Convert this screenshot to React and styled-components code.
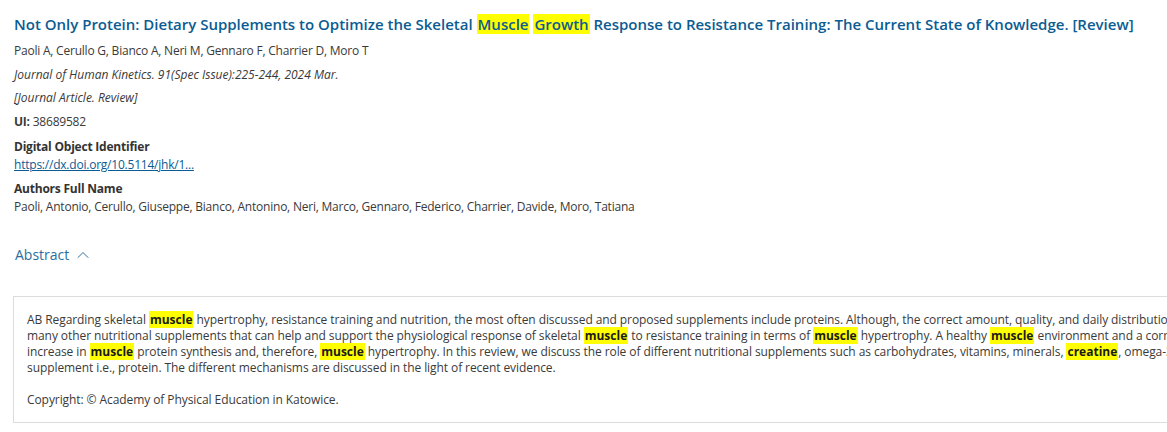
import React from 'react';
import styled, { createGlobalStyle } from 'styled-components';
import { ChevronUp } from 'lucide-react';

const GlobalStyle = createGlobalStyle`
  html, body {
    margin: 0;
    padding: 0;
    background: #ffffff;
    overflow: hidden;
  }
  body {
    font-family: "Open Sans", "Noto Sans", Arial, sans-serif;
    color: #333333;
  }
`;

const Page = styled.div`
  width: 1400px;
  padding: 13px 0 0 14px;
  box-sizing: border-box;
`;

const Title = styled.h1`
  margin: 0;
  font-size: 15px;
  font-weight: 600;
  line-height: 22px;
  color: #0b5c92;
`;

const Mark = styled.mark`
  background: #ffff00;
  color: ${p => (p.strong ? '#1a1a1a' : 'inherit')};
  font-weight: ${p => (p.strong ? 700 : 'inherit')};
  letter-spacing: 0;
  padding: 0 1px;
`;

const Meta = styled.div`
  display: flex;
  flex-direction: column;
  margin-top: 4px;
`;

const Line = styled.div`
  font-size: 12px;
  line-height: 23.7px;
  letter-spacing: ${p => (p.italic ? '0' : '-0.22px')};
  font-style: ${p => (p.italic ? 'italic' : 'normal')};
  color: #3a3a3a;
`;

const Label = styled.b`
  font-weight: 700;
`;

const Fields = styled.div`
  display: flex;
  flex-direction: column;
  gap: 6px;
  margin-top: 4px;
`;

const Field = styled.div`
  display: flex;
  flex-direction: column;
`;

const FieldLabel = styled.div`
  font-size: 12px;
  font-weight: 700;
  line-height: 18px;
  letter-spacing: -0.22px;
  color: #333333;
`;

const FieldValue = styled.div`
  font-size: 12px;
  line-height: 18px;
  letter-spacing: -0.22px;
  color: #3a3a3a;
`;

const DoiLink = styled.a`
  font-size: 12px;
  line-height: 18px;
  letter-spacing: -0.22px;
  color: #0b5c92;
  text-decoration: underline;
`;

const Toggle = styled.button`
  display: flex;
  align-items: center;
  gap: 4px;
  margin: 29px 0 0 1px;
  padding: 0;
  border: none;
  background: none;
  font-family: inherit;
  font-size: 14px;
  line-height: 20px;
  color: #2a6e9e;
  cursor: pointer;
`;

const AbstractBox = styled.div`
  margin: 31px 0 0 -1px;
  padding: 15px 13px 14px;
  border: 1px solid #dcdcdc;
  font-size: 12px;
  line-height: 16px;
  letter-spacing: -0.08px;
  color: #3a3a3a;
`;

const AbstractText = styled.p`
  margin: 0;
  white-space: nowrap;
`;

const Copyright = styled.p`
  margin: 16px 0 0;
`;

const HL = ({ children }) => <Mark strong>{children}</Mark>;

export default function App() {
  return (
    <>
      <GlobalStyle />
      <Page>
        <Title>
          Not Only Protein: Dietary Supplements to Optimize the Skeletal <Mark>Muscle</Mark> <Mark>Growth</Mark> Response
          to Resistance Training: The Current State of Knowledge. [Review]
        </Title>
        <Meta>
          <Line>Paoli A, Cerullo G, Bianco A, Neri M, Gennaro F, Charrier D, Moro T</Line>
          <Line italic>Journal of Human Kinetics. 91(Spec Issue):225-244, 2024 Mar.</Line>
          <Line italic>[Journal Article. Review]</Line>
          <Line>
            <Label>UI:</Label> 38689582
          </Line>
        </Meta>
        <Fields>
          <Field>
            <FieldLabel>Digital Object Identifier</FieldLabel>
            <DoiLink href="#">https://dx.doi.org/10.5114/jhk/1...</DoiLink>
          </Field>
          <Field>
            <FieldLabel>Authors Full Name</FieldLabel>
            <FieldValue>
              Paoli, Antonio, Cerullo, Giuseppe, Bianco, Antonino, Neri, Marco, Gennaro, Federico, Charrier, Davide,
              Moro, Tatiana
            </FieldValue>
          </Field>
        </Fields>
        <Toggle>
          Abstract <ChevronUp size={20} strokeWidth={1.2} />
        </Toggle>
        <AbstractBox>
          <AbstractText>
            AB Regarding skeletal <HL>muscle</HL> hypertrophy, resistance training and nutrition, the most often discussed
            and proposed supplements include proteins. Although, the correct amount, quality, and daily distribution of
            proteins are crucial for <HL>muscle</HL> growth, there are
            <br />
            many other nutritional supplements that can help and support the physiological response of skeletal{' '}
            <HL>muscle</HL> to resistance training in terms of <HL>muscle</HL> hypertrophy. A healthy <HL>muscle</HL>{' '}
            environment and a correct anabolic response can be positively affected, leading to an
            <br />
            increase in <HL>muscle</HL> protein synthesis and, therefore, <HL>muscle</HL> hypertrophy. In this review, we
            discuss the role of different nutritional supplements such as carbohydrates, vitamins, minerals,{' '}
            <HL>creatine</HL>, omega-3 fatty acids and others, in addition to the most popular
            <br />
            supplement i.e., protein. The different mechanisms are discussed in the light of recent evidence.
          </AbstractText>
          <Copyright>Copyright: © Academy of Physical Education in Katowice.</Copyright>
        </AbstractBox>
      </Page>
    </>
  );
}
